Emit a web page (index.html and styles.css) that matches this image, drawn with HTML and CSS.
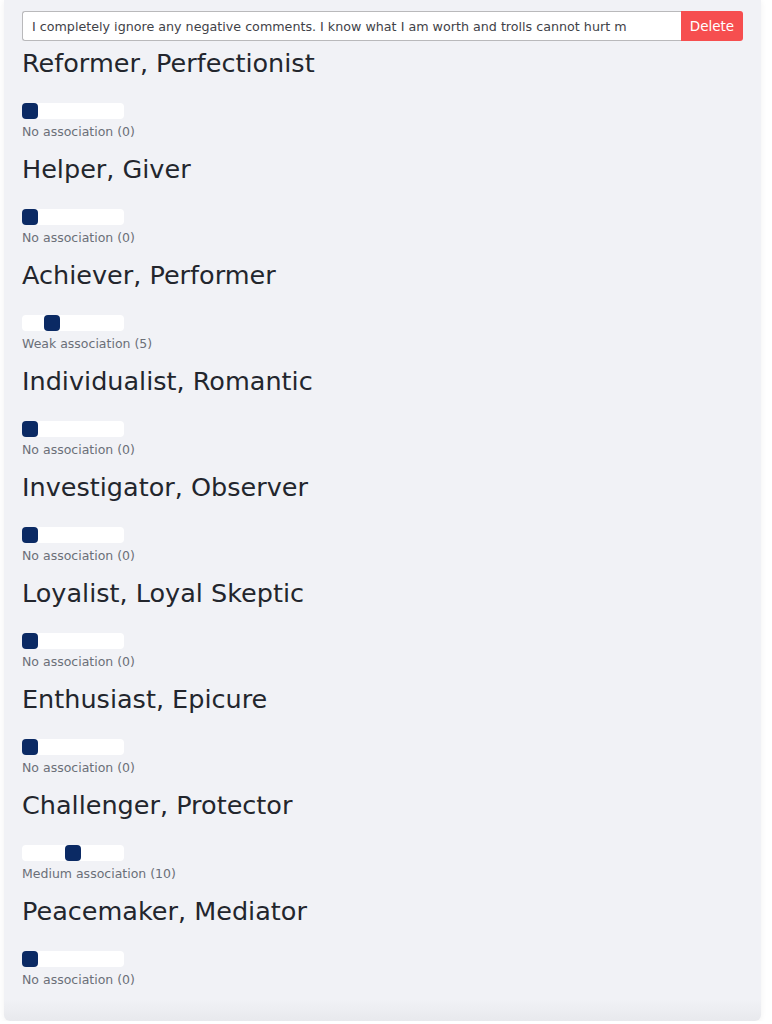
FILE: index.html
```html
<!DOCTYPE html>
<html>
<head>
    <title>Enneagram associations</title>
    <link rel="stylesheet" href="styles.css">
</head>
<body>
<div class="panel">
    <div class="statement">
        <input type="text" class="statement-text" value="I completely ignore any negative comments. I know what I am worth and trolls cannot hurt m">
        <button type="button" class="delete-btn">Delete</button>
    </div>

    <div class="types">
        <div class="type-row">
            <h2>Reformer, Perfectionist</h2>
            <input type="range" class="slider" min="0" max="20" value="0">
            <div class="label">No association (0)</div>
        </div>
        <div class="type-row">
            <h2>Helper, Giver</h2>
            <input type="range" class="slider" min="0" max="20" value="0">
            <div class="label">No association (0)</div>
        </div>
        <div class="type-row">
            <h2>Achiever, Performer</h2>
            <input type="range" class="slider" min="0" max="20" value="5">
            <div class="label">Weak association (5)</div>
        </div>
        <div class="type-row">
            <h2>Individualist, Romantic</h2>
            <input type="range" class="slider" min="0" max="20" value="0">
            <div class="label">No association (0)</div>
        </div>
        <div class="type-row">
            <h2>Investigator, Observer</h2>
            <input type="range" class="slider" min="0" max="20" value="0">
            <div class="label">No association (0)</div>
        </div>
        <div class="type-row">
            <h2>Loyalist, Loyal Skeptic</h2>
            <input type="range" class="slider" min="0" max="20" value="0">
            <div class="label">No association (0)</div>
        </div>
        <div class="type-row">
            <h2>Enthusiast, Epicure</h2>
            <input type="range" class="slider" min="0" max="20" value="0">
            <div class="label">No association (0)</div>
        </div>
        <div class="type-row">
            <h2>Challenger, Protector</h2>
            <input type="range" class="slider" min="0" max="20" value="10">
            <div class="label">Medium association (10)</div>
        </div>
        <div class="type-row">
            <h2>Peacemaker, Mediator</h2>
            <input type="range" class="slider" min="0" max="20" value="0">
            <div class="label">No association (0)</div>
        </div>
    </div>
</div>
</body>
</html>
```

FILE: styles.css
```css
body {
    margin: 0;
    background-color: #ffffff;
    font-family: "DejaVu Sans", sans-serif;
}

.panel {
    width: 721px;
    margin-left: 4px;
    padding: 11px 18px 34px 18px;
    background: linear-gradient(to bottom, #f1f2f6 calc(100% - 22px), #e8e9ed);
    border-radius: 0 0 6px 6px;
    box-shadow: 0 1px 6px rgba(0, 0, 0, 0.06);
}

.statement {
    display: flex;
    height: 30px;
}

.statement-text {
    flex: 1;
    box-sizing: border-box;
    height: 30px;
    margin: 0;
    padding: 0 9px;
    border: 1px solid #b9b9bb;
    border-right: none;
    border-radius: 3px 0 0 3px;
    background: #ffffff;
    font-family: inherit;
    font-size: 12.7px;
    color: #3f4248;
    outline: none;
}

.delete-btn {
    width: 62px;
    height: 30px;
    margin: 0;
    border: none;
    border-radius: 0 3px 3px 0;
    background-color: #f64e4f;
    color: #ffffff;
    font-family: inherit;
    font-size: 13.5px;
}

.types {
    margin-top: 8px;
}

.type-row + .type-row {
    padding-top: 16px;
}

.type-row h2 {
    margin: 0 0 1px 0;
    font-size: 25.5px;
    font-weight: normal;
    line-height: 29px;
    color: #23262d;
}

.slider {
    -webkit-appearance: none;
    appearance: none;
    display: block;
    width: 102px;
    height: 16px;
    margin: 25px 0 0 0;
    background: transparent;
}

.slider::-webkit-slider-runnable-track {
    height: 16px;
    border-radius: 4px;
    background: #ffffff;
}

.slider::-webkit-slider-thumb {
    -webkit-appearance: none;
    width: 16px;
    height: 16px;
    border-radius: 4px;
    background: #0b2a64;
}

.label {
    margin-top: 5px;
    font-size: 12.5px;
    line-height: 15px;
    color: #6b6f78;
}
```
